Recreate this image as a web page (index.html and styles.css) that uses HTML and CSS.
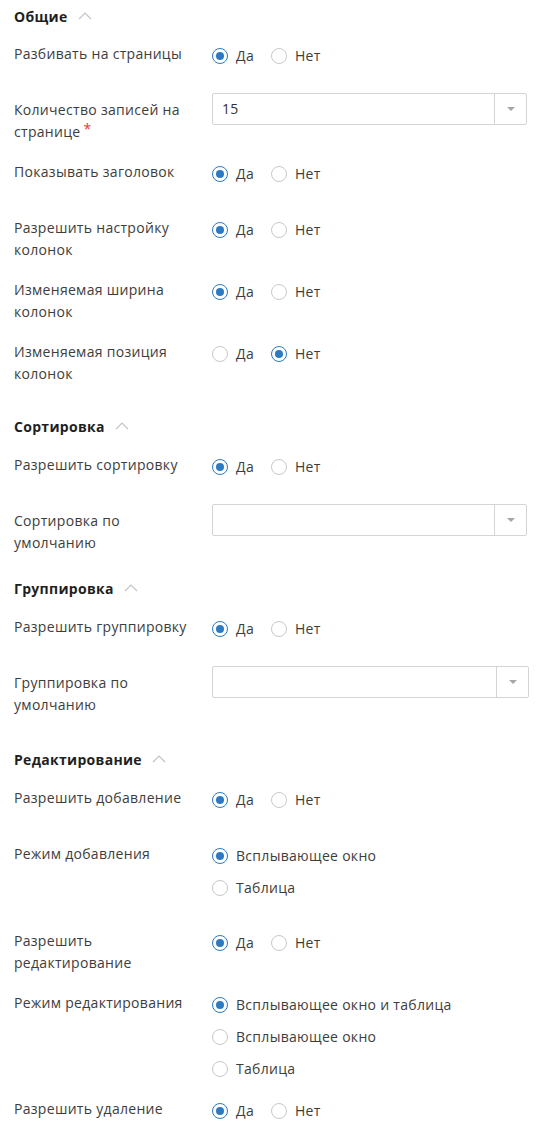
FILE: index.html
```html
<!DOCTYPE html>
<html lang="ru">
<head>
<meta charset="utf-8">
<title>Настройки таблицы</title>
<link rel="stylesheet" href="styles.css">
</head>
<body>
<div class="form">

  <div class="section-head first">
    <span class="section-title">Общие</span>
    <svg class="chevron" width="14" height="8" viewBox="0 0 14 8"><path d="M1 7 L7 1 L13 7" fill="none" stroke="#c4c4c4" stroke-width="1.2"/></svg>
  </div>

  <div class="row">
    <div class="label">Разбивать на страницы</div>
    <div class="control radios">
      <label class="radio on"><span class="dot"></span>Да</label>
      <label class="radio"><span class="dot"></span>Нет</label>
    </div>
  </div>

  <div class="row">
    <div class="label">Количество записей на странице<span class="req">*</span></div>
    <div class="control">
      <div class="select"><span class="value">15</span><span class="arrow"></span></div>
    </div>
  </div>

  <div class="row">
    <div class="label">Показывать заголовок</div>
    <div class="control radios">
      <label class="radio on"><span class="dot"></span>Да</label>
      <label class="radio"><span class="dot"></span>Нет</label>
    </div>
  </div>

  <div class="row">
    <div class="label">Разрешить настройку колонок</div>
    <div class="control radios">
      <label class="radio on"><span class="dot"></span>Да</label>
      <label class="radio"><span class="dot"></span>Нет</label>
    </div>
  </div>

  <div class="row">
    <div class="label">Изменяемая ширина колонок</div>
    <div class="control radios">
      <label class="radio on"><span class="dot"></span>Да</label>
      <label class="radio"><span class="dot"></span>Нет</label>
    </div>
  </div>

  <div class="row">
    <div class="label">Изменяемая позиция колонок</div>
    <div class="control radios">
      <label class="radio"><span class="dot"></span>Да</label>
      <label class="radio on"><span class="dot"></span>Нет</label>
    </div>
  </div>

  <div class="section-head">
    <span class="section-title">Сортировка</span>
    <svg class="chevron" width="14" height="8" viewBox="0 0 14 8"><path d="M1 7 L7 1 L13 7" fill="none" stroke="#c4c4c4" stroke-width="1.2"/></svg>
  </div>

  <div class="row">
    <div class="label">Разрешить сортировку</div>
    <div class="control radios">
      <label class="radio on"><span class="dot"></span>Да</label>
      <label class="radio"><span class="dot"></span>Нет</label>
    </div>
  </div>

  <div class="row">
    <div class="label">Сортировка по умолчанию</div>
    <div class="control">
      <div class="select"><span class="value"></span><span class="arrow"></span></div>
    </div>
  </div>

  <div class="section-head tight">
    <span class="section-title">Группировка</span>
    <svg class="chevron" width="14" height="8" viewBox="0 0 14 8"><path d="M1 7 L7 1 L13 7" fill="none" stroke="#c4c4c4" stroke-width="1.2"/></svg>
  </div>

  <div class="row">
    <div class="label">Разрешить группировку</div>
    <div class="control radios">
      <label class="radio on"><span class="dot"></span>Да</label>
      <label class="radio"><span class="dot"></span>Нет</label>
    </div>
  </div>

  <div class="row">
    <div class="label">Группировка по умолчанию</div>
    <div class="control">
      <div class="select wide"><span class="value"></span><span class="arrow"></span></div>
    </div>
  </div>

  <div class="section-head loose">
    <span class="section-title">Редактирование</span>
    <svg class="chevron" width="14" height="8" viewBox="0 0 14 8"><path d="M1 7 L7 1 L13 7" fill="none" stroke="#c4c4c4" stroke-width="1.2"/></svg>
  </div>

  <div class="row">
    <div class="label">Разрешить добавление</div>
    <div class="control radios">
      <label class="radio on"><span class="dot"></span>Да</label>
      <label class="radio"><span class="dot"></span>Нет</label>
    </div>
  </div>

  <div class="row">
    <div class="label">Режим добавления</div>
    <div class="control radios vertical extra">
      <label class="radio on"><span class="dot"></span>Всплывающее окно</label>
      <label class="radio"><span class="dot"></span>Таблица</label>
    </div>
  </div>

  <div class="row">
    <div class="label">Разрешить редактирование</div>
    <div class="control radios">
      <label class="radio on"><span class="dot"></span>Да</label>
      <label class="radio"><span class="dot"></span>Нет</label>
    </div>
  </div>

  <div class="row">
    <div class="label">Режим редактирования</div>
    <div class="control radios vertical">
      <label class="radio on"><span class="dot"></span>Всплывающее окно и таблица</label>
      <label class="radio"><span class="dot"></span>Всплывающее окно</label>
      <label class="radio"><span class="dot"></span>Таблица</label>
    </div>
  </div>

  <div class="row">
    <div class="label">Разрешить удаление</div>
    <div class="control radios">
      <label class="radio on"><span class="dot"></span>Да</label>
      <label class="radio"><span class="dot"></span>Нет</label>
    </div>
  </div>

</div>
</body>
</html>
```

FILE: styles.css
```css
html, body {
  margin: 0;
  padding: 0;
  background: #ffffff;
}

body {
  font-family: "Open Sans", "Noto Sans", sans-serif;
  font-size: 14px;
  line-height: 22px;
  letter-spacing: 0.3px;
  color: #3d3d3d;
}

.form {
  padding: 6px 15px 0 14px;
}

.section-head {
  display: flex;
  align-items: center;
  gap: 10px;
  height: 22px;
  margin-top: 31px;
  margin-bottom: 8px;
}

.section-head.first {
  margin-top: 0;
  margin-bottom: 7px;
}

.section-head.tight {
  margin-top: 24px;
}

.section-head.loose {
  margin-top: 33px;
}

.section-title {
  font-weight: 700;
  color: #1f1f1f;
}

.chevron {
  display: block;
  margin-top: -2px;
}

.row {
  display: flex;
  align-items: flex-start;
  margin-bottom: 10px;
}

.label {
  width: 198px;
  flex: none;
  padding-top: 8px;
  padding-right: 10px;
  box-sizing: border-box;
}

.req {
  color: #e53935;
  margin-left: 3px;
  vertical-align: 3px;
  line-height: 0;
}

.control {
  flex: 1;
  min-height: 46px;
}

.radios {
  display: flex;
  align-items: flex-start;
  gap: 17px;
  padding-top: 10px;
  box-sizing: border-box;
}

.radios.vertical {
  flex-direction: column;
  gap: 10px;
}

.radios.extra {
  padding-bottom: 13px;
}

.radio {
  display: flex;
  align-items: center;
  gap: 8px;
  height: 22px;
  color: #3d3d3d;
}

.dot {
  width: 16px;
  height: 16px;
  box-sizing: border-box;
  border: 1px solid #c9c9c9;
  border-radius: 50%;
  background: #fff;
  flex: none;
  position: relative;
}

.radio.on .dot {
  border-color: #2c7ac2;
}

.radio.on .dot::after {
  content: "";
  position: absolute;
  left: 3px;
  top: 3px;
  width: 8px;
  height: 8px;
  border-radius: 50%;
  background: #2c7ac2;
}

.select {
  display: flex;
  height: 32px;
  margin-top: 2px;
  box-sizing: border-box;
  border: 1px solid #d4d4d4;
  border-radius: 2px;
  background: #fff;
}

.select.wide {
  margin-right: -2px;
}

.select .value {
  flex: 1;
  padding: 4px 9px;
  line-height: 22px;
  color: #333;
}

.select .arrow {
  width: 31px;
  border-left: 1px solid #d4d4d4;
  display: flex;
  align-items: center;
  justify-content: center;
}

.select .arrow::after {
  content: "";
  width: 0;
  height: 0;
  border-left: 4px solid transparent;
  border-right: 4px solid transparent;
  border-top: 4px solid #a6a6a6;
}
```
